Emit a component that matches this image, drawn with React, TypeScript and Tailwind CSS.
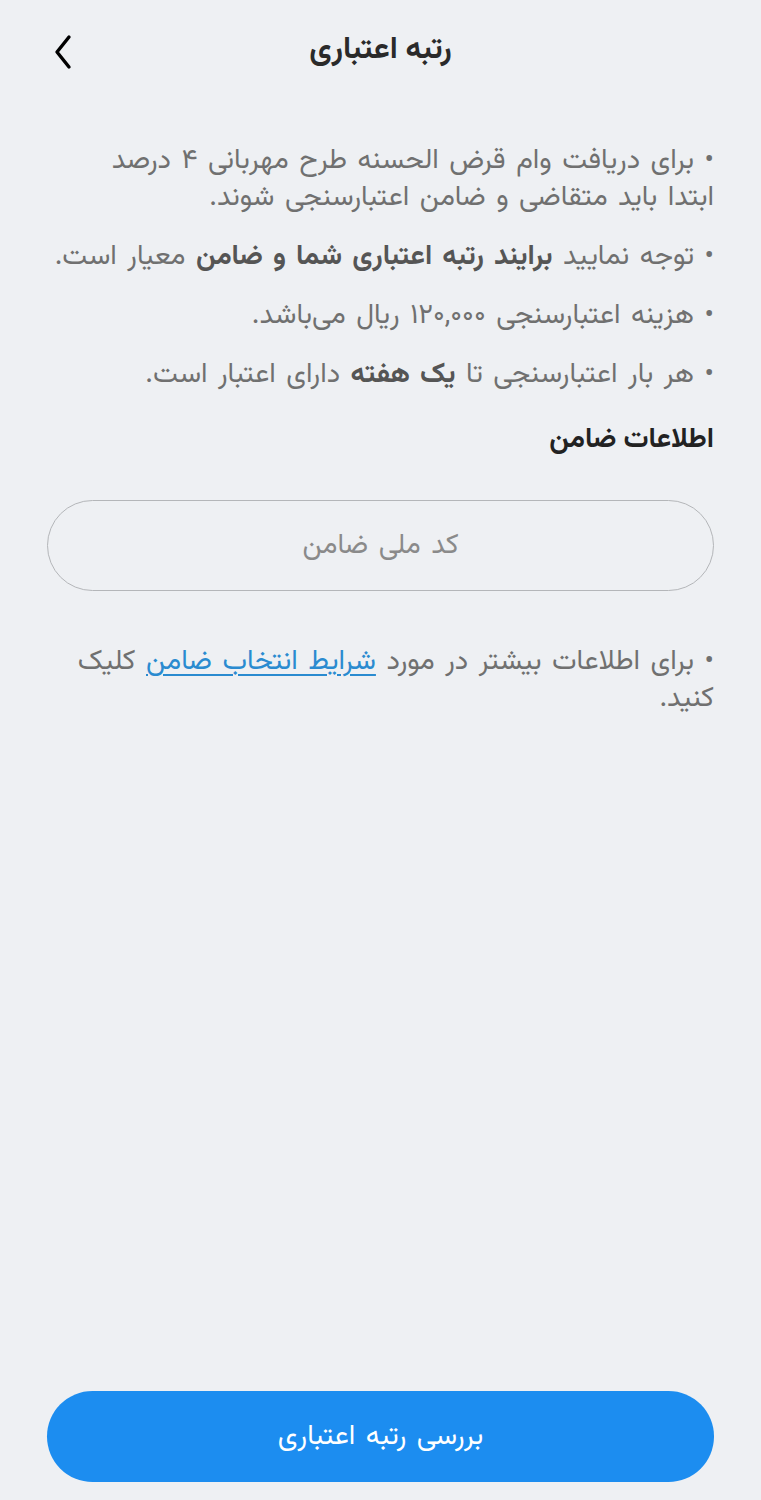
export default function App() {
  return (
    <div
      dir="rtl"
      className="flex min-h-[1500px] w-full flex-col bg-[#eef0f3] text-[#707070]"
      style={{ fontFamily: '"Vazirmatn", "Noto Sans Arabic", "DejaVu Sans", sans-serif' }}
    >
      {/* header */}
      <header className="relative flex h-[102px] items-center justify-center">
        <h1 className="text-[31px] font-bold text-[#2a2a2a]">رتبه اعتباری</h1>
        <button className="absolute left-[46px] top-[30px] p-1 text-black" aria-label="بازگشت">
          <svg width="26" height="36" viewBox="0 0 26 36" fill="none">
            <path d="M19 3 L7 18 L19 33" stroke="currentColor" strokeWidth="3.4" strokeLinecap="round" strokeLinejoin="round" />
          </svg>
        </button>
      </header>

      <main className="flex flex-1 flex-col px-[47px] pt-[41px]">
        <ul className="flex flex-col gap-[22px] text-[28px] leading-[37px] [word-spacing:3px]">
          <li className="pl-[50px]">• برای دریافت وام قرض الحسنه طرح مهربانی ۴ درصد ابتدا باید متقاضی و ضامن اعتبارسنجی شوند.</li>
          <li>
            • توجه نمایید <b className="text-[#555]">برایند رتبه اعتباری شما و ضامن</b> معیار است.
          </li>
          <li>• هزینه اعتبارسنجی ۱۲۰,۰۰۰ ریال می‌باشد.</li>
          <li>
            • هر بار اعتبارسنجی تا <b className="text-[#555]">یک هفته</b> دارای اعتبار است.
          </li>
        </ul>

        <h2 className="mt-[28px] text-[28px] font-bold leading-[37px] text-[#222]">اطلاعات ضامن</h2>

        <div className="mt-[41px] flex h-[91px] items-center justify-center rounded-full border-[1.5px] border-[#b4b6b9]">
          <span className="text-[28px] text-[#8a8a8a] [word-spacing:3px]">کد ملی ضامن</span>
        </div>

        <p className="mt-[53px] text-[28px] leading-[37px] [word-spacing:3px]">
          • برای اطلاعات بیشتر در مورد{" "}
          <a className="text-[#2a8bd0] underline decoration-[1.5px] underline-offset-[5px]">شرایط انتخاب ضامن</a> کلیک کنید.
        </p>

        <div className="flex-1" />

        <button className="mb-[18px] flex h-[91px] w-full items-center justify-center rounded-full bg-[#1c8df0] text-[28px] text-white [word-spacing:3px]">
          بررسی رتبه اعتباری
        </button>
      </main>
    </div>
  )
}
